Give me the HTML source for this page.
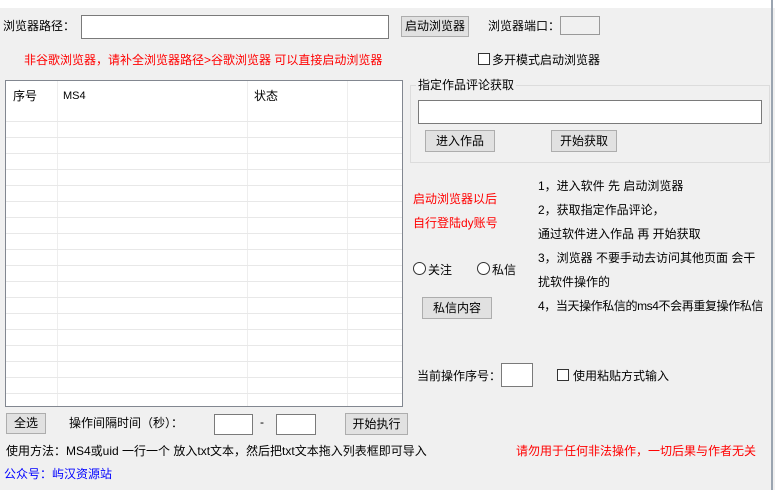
<!DOCTYPE html><html><head><meta charset="utf-8"><style>
body{margin:0;width:775px;height:490px;background:#f0f0f0;position:relative;overflow:hidden;font-family:"Liberation Sans","Noto Sans CJK SC",sans-serif;font-size:12px;color:#000}
.a{position:absolute;white-space:nowrap;line-height:14px}
.inp{position:absolute;background:#fff;border:1px solid #7a7a7a;box-sizing:border-box}
.btn{position:absolute;background:#e1e1e1;border:1px solid #adadad;box-sizing:border-box;text-align:center;font-size:12px}
.red{color:#f00}
.cb{position:absolute;width:12px;height:12px;border:1px solid #333;background:#fff;box-sizing:border-box}
.rb{position:absolute;width:13px;height:13px;border:1px solid #333;border-radius:50%;background:#fff;box-sizing:border-box}
</style></head><body>
<div style="position:absolute;left:0;top:0;width:775px;height:8px;background:#fff"></div>
<div style="position:absolute;left:771px;top:0;width:2px;height:490px;background:#9aa4b0"></div>
<div class="a" style="left:3px;top:19px">浏览器路径：</div>
<div class="inp" style="left:81px;top:15px;width:308px;height:24px"></div>
<div class="btn" style="left:401px;top:16px;width:68px;height:21px;line-height:19px">启动浏览器</div>
<div class="a" style="left:488px;top:19px">浏览器端口：</div>
<div class="inp" style="left:560px;top:16px;width:40px;height:19px;background:#f0f0f0;border-color:#999"></div>
<div class="a red" style="left:24px;top:53px">非谷歌浏览器，请补全浏览器路径&gt;谷歌浏览器 可以直接启动浏览器</div>
<div class="cb" style="left:478px;top:53px"></div>
<div class="a" style="left:492px;top:53px">多开模式启动浏览器</div>

<div style="position:absolute;left:5px;top:80px;width:398px;height:327px;border:1px solid #828790;background:#fff;box-sizing:border-box;overflow:hidden">
<div class="a" style="left:7px;top:8px">序号</div>
<div class="a" style="left:57px;top:8px;font-size:11px">MS4</div>
<div class="a" style="left:248px;top:8px">状态</div>
<div style="position:absolute;left:51px;top:0;width:1px;height:330px;background:#eee"></div>
<div style="position:absolute;left:241px;top:0;width:1px;height:330px;background:#eee"></div>
<div style="position:absolute;left:341px;top:0;width:1px;height:330px;background:#eee"></div>
<div style="position:absolute;left:0;top:40px;width:400px;height:290px;background:repeating-linear-gradient(to bottom,#e8e8e8 0,#e8e8e8 1px,transparent 1px,transparent 16px)"></div>
</div>

<div style="position:absolute;left:410px;top:85px;width:360px;height:78px;border:1px solid #dcdcdc;box-sizing:border-box"></div>
<div class="a" style="left:416px;top:78px;background:#f0f0f0;padding:0 2px">指定作品评论获取</div>
<div class="inp" style="left:418px;top:100px;width:344px;height:24px"></div>
<div class="btn" style="left:425px;top:130px;width:70px;height:22px;line-height:20px">进入作品</div>
<div class="btn" style="left:551px;top:130px;width:66px;height:22px;line-height:20px">开始获取</div>

<div class="a red" style="left:413px;top:192px">启动浏览器以后</div>
<div class="a red" style="left:413px;top:216px">自行登陆dy账号</div>
<div class="a" style="left:538px;top:179px">1，进入软件 先 启动浏览器</div>
<div class="a" style="left:538px;top:203px">2，获取指定作品评论，</div>
<div class="a" style="left:538px;top:227px">通过软件进入作品 再 开始获取</div>
<div class="a" style="left:538px;top:251px">3，浏览器 不要手动去访问其他页面 会干</div>
<div class="a" style="left:538px;top:275px">扰软件操作的</div>
<div class="a" style="left:538px;top:299px;letter-spacing:-0.4px">4，当天操作私信的ms4不会再重复操作私信</div>
<div class="rb" style="left:413px;top:262px"></div>
<div class="a" style="left:428px;top:263px">关注</div>
<div class="rb" style="left:477px;top:262px"></div>
<div class="a" style="left:492px;top:263px">私信</div>
<div class="btn" style="left:422px;top:297px;width:70px;height:22px;line-height:20px">私信内容</div>
<div class="a" style="left:417px;top:369px">当前操作序号：</div>
<div class="inp" style="left:501px;top:363px;width:32px;height:24px"></div>
<div class="cb" style="left:557px;top:369px"></div>
<div class="a" style="left:573px;top:369px">使用粘贴方式输入</div>

<div class="btn" style="left:6px;top:413px;width:40px;height:21px;line-height:19px">全选</div>
<div class="a" style="left:69px;top:416px">操作间隔时间（秒）：</div>
<div class="inp" style="left:214px;top:414px;width:39px;height:21px"></div>
<div class="a" style="left:260px;top:415px">-</div>
<div class="inp" style="left:276px;top:414px;width:40px;height:21px"></div>
<div class="btn" style="left:345px;top:413px;width:63px;height:22px;line-height:20px">开始执行</div>
<div class="a" style="left:6px;top:444px">使用方法：MS4或uid 一行一个 放入txt文本，然后把txt文本拖入列表框即可导入</div>
<div class="a red" style="left:516px;top:444px">请勿用于任何非法操作，一切后果与作者无关</div>
<div class="a" style="left:4px;top:467px;color:#00f">公众号：屿汉资源站</div>
</body></html>
